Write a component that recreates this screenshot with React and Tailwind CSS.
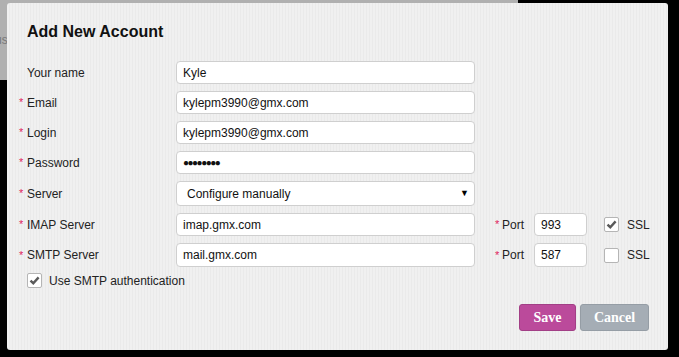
import React from "react";

const font = { fontFamily: '"Liberation Sans", Arial, sans-serif' };
const serif = { fontFamily: '"Liberation Serif", "Times New Roman", serif' };

function Label({ text, required }) {
  return (
    <div className="w-[157px] shrink-0 flex items-center text-[12px] text-[#222]">
      <span className="w-[8px] text-[#e0245e] text-[11px] leading-none">
        {required ? "*" : ""}
      </span>
      <span>{text}</span>
    </div>
  );
}

function TextInput({ value, className = "" }) {
  return (
    <div
      className={`h-full shrink-0 bg-white border border-[#cfcfcf] rounded-[4px] flex items-center px-[6px] text-[12px] text-[#111] ${className}`}
    >
      {value}
    </div>
  );
}

function Check({ checked }) {
  return (
    <div className="w-[15px] h-[15px] shrink-0 bg-white border border-[#b5b5b5] rounded-[2px] flex items-center justify-center">
      {checked && (
        <svg width="11" height="11" viewBox="0 0 11 11">
          <path
            d="M1.5 5.6 L4.3 8.2 L9.6 2.4"
            fill="none"
            stroke="#5a5a5a"
            strokeWidth="2.4"
          />
        </svg>
      )}
    </div>
  );
}

function PortGroup({ port, ssl }) {
  return (
    <div className="flex items-center h-full shrink-0">
      <div className="w-[20px] shrink-0" />
      <div className="w-[39px] shrink-0 flex items-center text-[12px] text-[#222]">
        <span className="w-[7px] text-[#e0245e] text-[11px] leading-none">*</span>
        <span>Port</span>
      </div>
      <TextInput value={port} className="w-[53px]" />
      <div className="w-[17px] shrink-0" />
      <Check checked={ssl} />
      <span className="ml-[8px] text-[12px] text-[#222] whitespace-nowrap">SSL</span>
    </div>
  );
}

export default function App() {
  return (
    <div
      className="relative w-[679px] h-[357px] bg-black overflow-hidden"
      style={font}
    >
      {/* page behind the overlay */}
      <div className="absolute left-0 top-0 w-[518px] h-[80px] bg-[#b0b0b0]">
        <span className="absolute left-[-5px] top-[31px] text-[12px] text-[#777]">
          us
        </span>
      </div>

      <div className="relative ml-[7px] mt-[3px] w-[661px] h-[347px] rounded-[3px] bg-[#efefef] bg-[repeating-linear-gradient(90deg,#f0f0f0_0px,#f0f0f0_2px,#eaeaea_2px,#eaeaea_3px)] pl-[12px] pr-[10px] flex flex-col">
        <h1 className="mt-[19px] ml-[8px] h-[20px] text-[16px] font-bold text-[#111] leading-[20px]">
          Add New Account
        </h1>

        <div className="mt-[19px] flex flex-col">
          <div className="flex h-[23px]">
            <Label text="Your name" />
            <TextInput value="Kyle" className="w-[299px]" />
          </div>
          <div className="flex h-[23px] mt-[7px]">
            <Label text="Email" required />
            <TextInput value="kylepm3990@gmx.com" className="w-[299px]" />
          </div>
          <div className="flex h-[23px] mt-[7px]">
            <Label text="Login" required />
            <TextInput value="kylepm3990@gmx.com" className="w-[299px]" />
          </div>
          <div className="flex h-[23px] mt-[7px]">
            <Label text="Password" required />
            <TextInput
              value={<span className="text-[10px] tracking-[-1.5px]">●●●●●●●●</span>}
              className="w-[299px]"
            />
          </div>
          <div className="flex h-[25px] mt-[7px]">
            <Label text="Server" required />
            <div className="w-[299px] shrink-0 h-full bg-white border border-[#cfcfcf] rounded-[4px] flex items-center pl-[10px] pr-[5px] text-[12px] text-[#111]">
              <span className="flex-1">Configure manually</span>
              <span className="text-[9px] text-black">▼</span>
            </div>
          </div>
          <div className="flex h-[23px] mt-[7px]">
            <Label text="IMAP Server" required />
            <TextInput value="imap.gmx.com" className="w-[299px]" />
            <PortGroup port="993" ssl />
          </div>
          <div className="flex h-[24px] mt-[7px]">
            <Label text="SMTP Server" required />
            <TextInput value="mail.gmx.com" className="w-[299px]" />
            <PortGroup port="587" />
          </div>
          <div className="flex items-center h-[15px] mt-[6px] ml-[8px]">
            <Check checked />
            <span className="ml-[7px] text-[12px] text-[#222]">
              Use SMTP authentication
            </span>
          </div>
        </div>

        <div className="mt-[16px] mr-[9px] flex justify-end gap-[4px]">
          <button
            className="w-[57px] h-[27px] rounded-[3px] bg-[#bb4a9b] border border-[#a23f86] text-white font-bold text-[14px]"
            style={serif}
          >
            Save
          </button>
          <button
            className="w-[69px] h-[27px] rounded-[3px] bg-[#a5adb5] border border-[#959da5] text-white font-bold text-[14px]"
            style={serif}
          >
            Cancel
          </button>
        </div>
      </div>
    </div>
  );
}
